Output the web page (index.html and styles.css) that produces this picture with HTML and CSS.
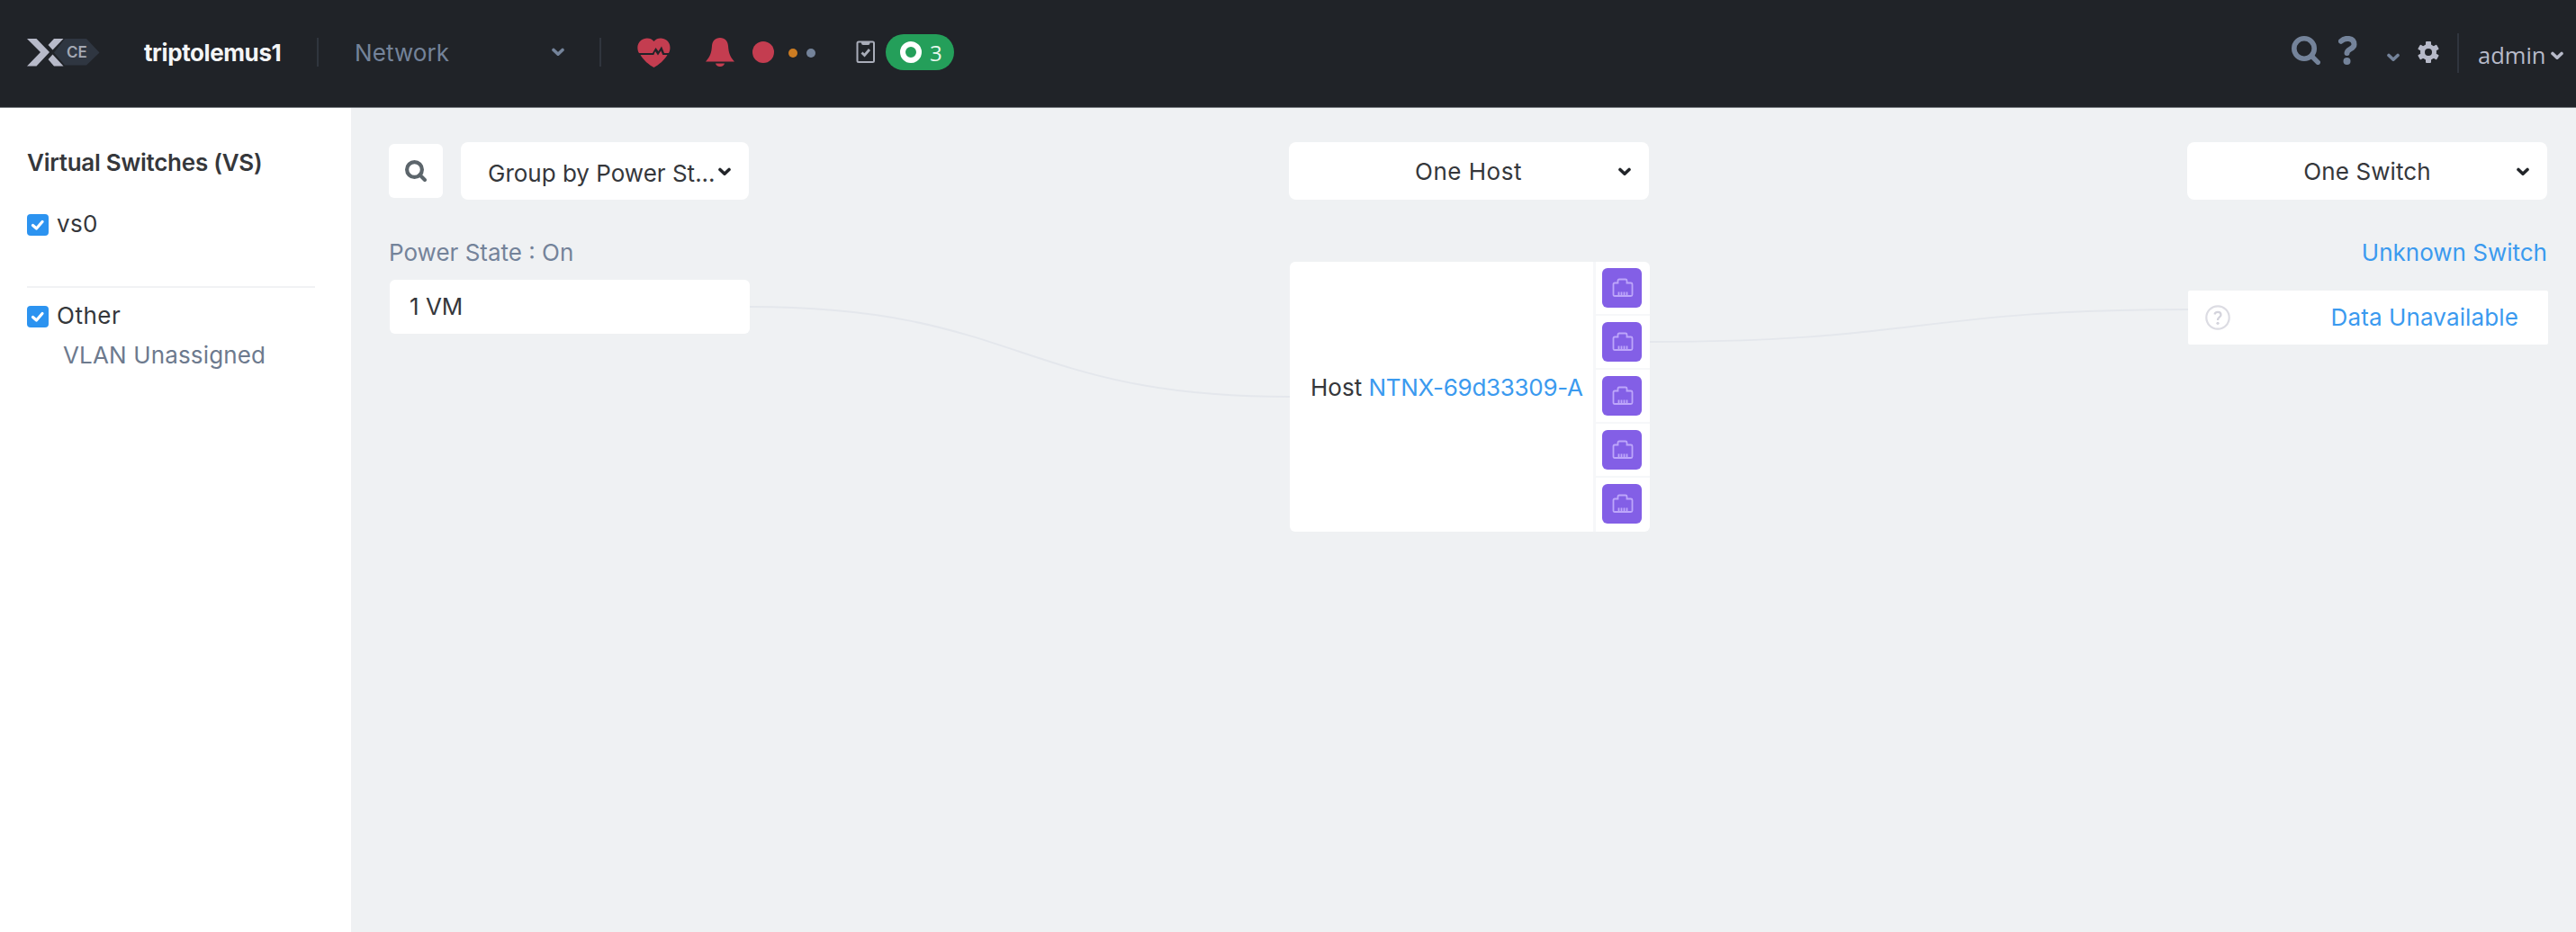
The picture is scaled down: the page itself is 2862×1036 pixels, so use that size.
FILE: index.html
```html
<!DOCTYPE html>
<html lang="en">
<head>
<meta charset="utf-8">
<title>triptolemus1 - Network</title>
<link rel="stylesheet" href="styles.css">
</head>
<body>
<svg class="defs" width="0" height="0">
  <symbol id="chevron" viewBox="0 0 14 10"><path d="M2 2.5 L7 7.2 L12 2.5" fill="none" stroke="currentColor" stroke-width="3.6" stroke-linecap="round" stroke-linejoin="round"/></symbol>
  <symbol id="check" viewBox="0 0 24 24"><path d="M6.500 12.500 L10.500 16 L17 8.500" fill="none" stroke="#fff" stroke-width="3.200" stroke-linecap="round" stroke-linejoin="round"/></symbol>
  <symbol id="magnifier" viewBox="0 0 32 32"><circle cx="14" cy="14" r="11.2" fill="none" stroke="currentColor" stroke-width="5.600"/><path d="M22 22 L29.300 29.300" stroke="currentColor" stroke-width="5.400" stroke-linecap="round"/></symbol>
  <symbol id="port" viewBox="0 0 24 22"><path d="M3 5.500 H6.500 V3 Q6.500 1.500 8 1.500 H15 Q16.500 1.500 16.500 3 V5.500 H21 Q22.500 5.500 22.500 7 V18.500 Q22.500 20 21 20 H3 Q1.500 20 1.500 18.500 V7 Q1.500 5.500 3 5.500 Z M7.500 15.500 V20 M10.500 15.500 V20 M13.500 15.500 V20 M16.500 15.500 V20" fill="none" stroke="#bda6fa" stroke-width="1.800"/></symbol>
</svg>

<header class="topbar">
  <div class="logo">
    <svg width="82" height="32" viewBox="0 0 82 32">
      <path d="M30 16.500 L42 1 H66 L80.500 16.500 L66 30.500 H42 Z" fill="#2f3641"/>
      <path d="M0 1 H10.500 L25 16 L10.500 31.500 H0 L15 16 Z" fill="#b7bac9"/>
      <path d="M23.500 8 L30 1 H40.500 L28.500 13.500 Z M28.500 18.500 L40.500 31.500 H30 L23.500 24 Z" fill="#b7bac9"/>
    </svg>
    <span class="edition">CE</span>
  </div>
  <div class="cluster">triptolemus1</div>
  <span class="sep"></span>
  <div class="nav">Network</div>
  <svg class="nav-chevron" width="14" height="10"><use href="#chevron"/></svg>
  <span class="sep"></span>
  <svg class="heart" width="37" height="33" viewBox="0 0 37 33">
    <path d="M18.500 4 C22 -0.500 29 -0.500 33 3 C37.500 7 37 13 35 17 H30 L27 9.500 L23.500 15 L20.500 11 L17 17 H2 C-0.500 12.500 -0.500 7 4 3 C8 -0.500 15 -0.500 18.500 4 Z" fill="#c43d50"/>
    <path d="M3.500 19 H18.300 L20 15 L23 19.500 L26.300 14.500 L28.300 19 H33.500 C30 25 24 30 18.500 33 C13 30 7 25 3.500 19 Z" fill="#c43d50"/>
  </svg>
  <svg class="bell" width="32" height="32" viewBox="0 0 32 32">
    <path d="M16 0 C21.500 0 24.500 3.500 25 9 C25.700 17 26.500 20 32 26.500 H0 C5.500 20 6.300 17 7 9 C7.500 3.500 10.500 0 16 0 Z M11 28.500 H21 C20 33.200 12 33.200 11 28.500 Z" fill="#c43d50"/>
  </svg>
  <span class="dot critical"></span>
  <span class="dot warning"></span>
  <span class="dot info"></span>
  <svg class="clipboard" width="22" height="26" viewBox="0 0 22 26">
    <rect x="1.500" y="1.500" width="18.500" height="22.500" rx="1.500" fill="none" stroke="#a9adb9" stroke-width="2"/>
    <path d="M6 1 H15.500 V3 Q15.500 5 13.500 5 H8 Q6 5 6 3 Z" fill="#a9adb9"/>
    <path d="M6.500 13.500 L9.500 16.500 L15 10" fill="none" stroke="#a9adb9" stroke-width="2.800"/>
  </svg>
  <div class="tasks"><span class="ring"></span><span>3</span></div>

  <svg class="top-search" width="32" height="32"><use href="#magnifier"/></svg>
  <svg class="help" width="21" height="32" viewBox="0 0 21 32">
    <path d="M3 5.800 C7 1.500 17.500 1.500 17.500 9.500 C17.500 14.500 9.500 14.500 9.500 19" fill="none" stroke="#74839a" stroke-width="6" stroke-linecap="round"/>
    <circle cx="9.500" cy="28" r="4" fill="#74839a"/>
  </svg>
  <svg class="help-chevron" width="14" height="10"><use href="#chevron"/></svg>
  <svg class="gear" width="24" height="24" viewBox="-12 -12 24 24">
    <g fill="#b7bac9"><rect x="-3" y="-12" width="6" height="24" rx="1"/><rect x="-3" y="-12" width="6" height="24" rx="1" transform="rotate(60)"/><rect x="-3" y="-12" width="6" height="24" rx="1" transform="rotate(120)"/><circle r="9"/></g>
    <circle r="4" fill="#202328"/>
  </svg>
  <span class="sep tall"></span>
  <div class="user">admin</div>
  <svg class="user-chevron" width="14" height="10"><use href="#chevron"/></svg>
</header>

<div class="layout">
  <aside class="sidebar">
    <h2 class="side-title">Virtual Switches (VS)</h2>
    <div class="option"><span class="box"><svg width="24" height="24"><use href="#check"/></svg></span><span class="option-name vs">vs0</span></div>
    <hr class="rule">
    <div class="option"><span class="box"><svg width="24" height="24"><use href="#check"/></svg></span><span class="option-name other">Other</span></div>
    <div class="vlan">VLAN Unassigned</div>
  </aside>

  <main class="canvas">
    <svg class="links" width="2472" height="916" viewBox="390 120 2472 916">
      <path d="M833 341 C1133 341 1133 441 1433 441"/>
      <path d="M1833 380 C2132 380 2132 344 2431 344"/>
    </svg>

    <section class="col vms">
      <div class="tools">
        <div class="search"><svg width="24" height="24"><use href="#magnifier"/></svg></div>
        <div class="select group"><span class="value">Group by Power St...</span><svg width="14" height="10"><use href="#chevron"/></svg></div>
      </div>
      <div class="label">Power State : On</div>
      <div class="card vm">1 VM</div>
    </section>

    <section class="col hosts">
      <div class="select"><span class="value one-host">One Host</span><svg width="14" height="10"><use href="#chevron"/></svg></div>
      <div class="card host">
        <div class="host-name">Host <a class="link">NTNX-69d33309-A</a></div>
        <div class="ports">
          <div class="port"><span class="nic"><svg width="24" height="22"><use href="#port"/></svg></span></div>
          <div class="port"><span class="nic"><svg width="24" height="22"><use href="#port"/></svg></span></div>
          <div class="port"><span class="nic"><svg width="24" height="22"><use href="#port"/></svg></span></div>
          <div class="port"><span class="nic"><svg width="24" height="22"><use href="#port"/></svg></span></div>
          <div class="port"><span class="nic"><svg width="24" height="22"><use href="#port"/></svg></span></div>
        </div>
      </div>
    </section>

    <section class="col switches">
      <div class="select"><span class="value one-switch">One Switch</span><svg width="14" height="10"><use href="#chevron"/></svg></div>
      <div class="label link">Unknown Switch</div>
      <div class="card switch">
        <svg width="28" height="28" viewBox="0 0 28 28">
          <circle cx="14" cy="14" r="12.700" fill="none" stroke="#dcdce3" stroke-width="2.200"/>
          <path d="M10.500 10.500 C11 7 17.500 7 17.500 11 C17.500 13.500 14 13.500 14 17" fill="none" stroke="#d3d3dc" stroke-width="2.200"/>
          <circle cx="14" cy="20.300" r="1.600" fill="#d3d3dc"/>
        </svg>
        <a class="link">Data Unavailable</a>
      </div>
    </section>
  </main>
</div>
</body>
</html>
```

FILE: styles.css
```css
* { box-sizing: border-box; }
body {
  margin: 0;
  height: 1036px;
  overflow: hidden;
  background: #eff1f3;
  color: #35373b;
  font: 400 26px/33px Inter, "Liberation Sans", sans-serif;
  white-space: nowrap;
}
svg { display: block; flex: none; }
.defs { position: absolute; }

/* Top bar */
.topbar {
  display: flex;
  align-items: center;
  height: 120px;
  padding: 0 14px 3px 30px;
  background: #202328;
  border-bottom: 1px solid #767a7f;
}
.topbar > * { flex: none; }
.logo { display: grid; align-items: center; width: 82px; }
.logo > * { grid-area: 1 / 1; }
.edition {
  padding-left: 44px;
  color: #a4a8b3;
  font-size: 17px;
  font-weight: 600;
}
.cluster {
  width: 192px;
  margin-left: 48px;
  color: #f4f5f6;
  font-weight: 700;
  letter-spacing: -0.4px;
}
.sep { width: 2px; height: 32px; background: #30353e; }
.sep.tall { height: 44px; margin: 2px 21px 0 20px; }
.nav { width: 219px; margin-left: 40px; color: #74839a; letter-spacing: 0.1px; }
.nav-chevron { margin-right: 39px; color: #74839a; }
.heart { margin-left: 40px; }
.bell { margin-left: 39px; }
.dot { width: 10px; height: 10px; margin: 2px 0 0 10px; border-radius: 50%; }
.critical { width: 24px; height: 24px; margin: 0 6px 0 20px; background: #c43d50; }
.warning { background: #cc7c22; }
.info { background: #74839a; }
.clipboard { margin-left: 45px; }
.tasks {
  display: flex;
  align-items: center;
  gap: 9px;
  width: 76px;
  height: 40px;
  margin-left: 11px;
  padding-left: 16px;
  border-radius: 20px;
  background: #249f5a;
  color: #e9f7ee;
  font-family: "Open Sans", sans-serif;
  font-size: 24px;
}
.ring { width: 24px; height: 24px; border: 6px solid #fff; border-radius: 50%; }
.top-search { margin: 0 20px 4px auto; color: #74839a; }
.help { margin-bottom: 4px; }
.help-chevron { margin: 12px 20px 0 33px; color: #74839a; }
.user {
  width: 81px;
  padding-top: 6px;
  color: #b7bac9;
  font-family: "Open Sans", sans-serif;
  font-size: 25.5px;
}
.user-chevron { margin-top: 8px; color: #b7bac9; }

/* Sidebar */
.layout { display: flex; height: 916px; }
.sidebar { width: 390px; padding: 44px 40px 0 30px; background: #fff; }
.side-title { margin: 0 0 41px; font-size: 26px; font-weight: 600; letter-spacing: -0.26px; }
.option { display: flex; align-items: center; gap: 9px; height: 24px; }
.box { width: 24px; height: 24px; border-radius: 4px; background: #2c93f0; }
.option-name { padding-bottom: 3px; }
.vs { letter-spacing: 0.3px; }
.other { letter-spacing: 0.5px; }
.rule { height: 2px; margin: 56px 0 20px; border: 0; background: #f1f2f4; }
.vlan { margin: 14px 0 0 40px; color: #6d7a8e; letter-spacing: 0.15px; }

/* Topology */
.canvas { position: relative; display: flex; flex: 1; padding: 38px 32px 0 42px; }
.links { position: absolute; top: 0; left: 0; fill: none; stroke: #e4e7ec; stroke-width: 2; }
.col { position: relative; flex: none; width: 400px; }
.hosts { margin-left: 600px; }
.switches { margin-left: 598px; }
.tools { display: flex; align-items: center; gap: 20px; }
.search {
  display: grid;
  place-items: center;
  width: 60px;
  height: 60px;
  border-radius: 6px;
  background: #fff;
  color: #5c656b;
}
.select {
  display: grid;
  grid-template-columns: 20px 1fr 20px;
  align-items: center;
  height: 64px;
  border-radius: 8px;
  background: #fff;
}
.select .value { grid-area: 1 / 1 / 2 / 4; text-align: center; }
.select svg { grid-area: 1 / 2; justify-self: end; margin-top: 2px; color: #222529; }
.select.group { width: 320px; }
.select.group .value { padding: 5px 0 0 30px; text-align: left; }
.select .one-host { padding-right: 1px; letter-spacing: 0.5px; }
.one-switch { letter-spacing: 0.1px; }
.label { margin-top: 42px; color: #74839a; }
.label.link { text-align: right; letter-spacing: 0; }
.link { color: #3b9aef; }
.card { width: 400px; margin-left: 1px; border-radius: 6px; background: #fff; }
.vm { height: 60px; margin-top: 14px; padding: 13px 22px; }
.host { display: flex; height: 300px; margin-top: 69px; overflow: hidden; }
.host-name { flex: 1; align-self: center; padding: 0 0 21px 23px; }
.host-name .link { letter-spacing: -0.3px; }
.ports { width: 63px; border-left: 3px solid #f6f7f9; }
.port { display: grid; height: 60px; padding: 7px 0 0 7px; border-bottom: 2px solid #f6f7f9; }
.port:last-child { border-bottom: 0; }
.nic { width: 44px; height: 44px; padding: 11px 0 0 11px; border-radius: 6px; background: #835fe6; }
.switch {
  display: flex;
  align-items: center;
  justify-content: space-between;
  height: 60px;
  margin-top: 26px;
  padding: 0 33px 1px 19px;
  border-radius: 2px;
}
.switch .link { letter-spacing: 0.12px; }
```
